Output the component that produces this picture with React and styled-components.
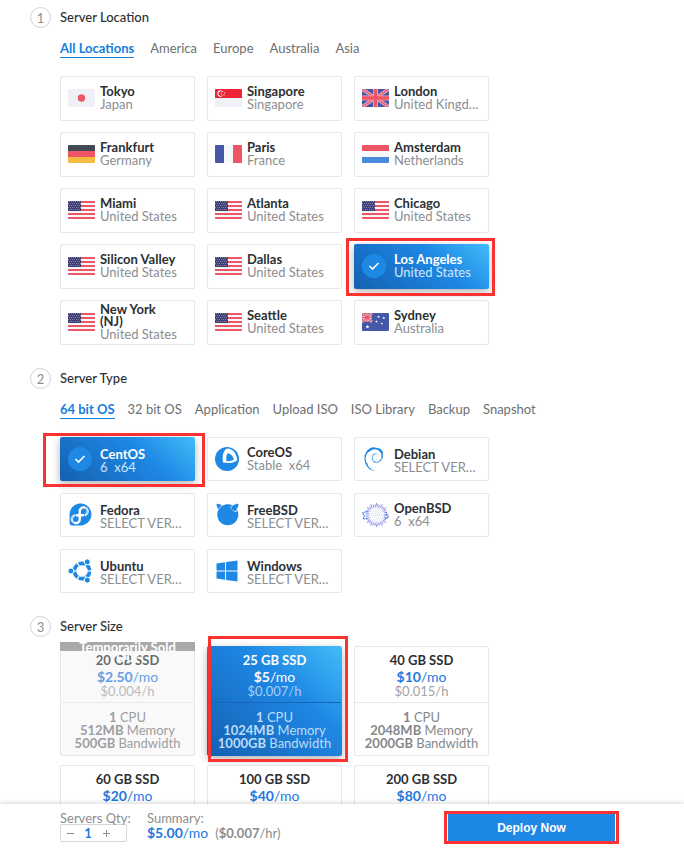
import React from "react";
import styled, { createGlobalStyle, css } from "styled-components";
import { FaFedora, FaFreebsd, FaWindows } from "react-icons/fa";
import { SiDebian } from "react-icons/si";

const GlobalStyle = createGlobalStyle`
  *, *::before, *::after { box-sizing: border-box; }
  body {
    margin: 0;
    background: #fff;
    color: #333;
    font-family: Lato, "Open Sans", sans-serif;
    font-size: 13px;
  }
  button, input { font: inherit; color: inherit; }
  h2, p { margin: 0; }
`;

const Page = styled.div`
  display: flex;
  flex-direction: column;
  height: 100vh;
`;

const Content = styled.main`
  flex: 1;
  min-height: 0;
  overflow-y: auto;
  scrollbar-width: none;
  padding: 7px 60px 20px 30px;
`;

const Section = styled.section`
  padding-left: 30px;
  margin-bottom: 23px;
`;

const SectionHead = styled.header`
  display: flex;
  align-items: flex-start;
  gap: 9px;
  margin: 0 0 ${(p) => p.$space || 0}px -30px;
`;

const StepNumber = styled.span`
  display: grid;
  place-items: center;
  width: 21px;
  height: 21px;
  border: 1px solid #ced4da;
  border-radius: 50%;
  color: #868e96;
  font-size: 13px;
`;

const SectionTitle = styled.h2`
  font-size: 13px;
  font-weight: 500;
  line-height: 20px;
  color: #2c3033;
`;

const TabList = styled.nav`
  display: flex;
  flex-wrap: wrap;
  gap: 0 ${(p) => p.$gap}px;
  margin: 12px 0 18px;
`;

const Tab = styled.button`
  padding: 0;
  border: 0;
  border-bottom: 1px solid ${(p) => (p.$active ? "#1480dc" : "transparent")};
  background: none;
  color: ${(p) => (p.$active ? "#1480dc" : "#6c6f73")};
  font-weight: ${(p) => (p.$active ? 700 : 400)};
  line-height: 17px;
  cursor: pointer;
`;

const CardGrid = styled.div`
  display: grid;
  grid-template-columns: repeat(3, minmax(0, 1fr));
  grid-auto-rows: minmax(${(p) => p.$row}px, auto);
  gap: ${(p) => p.$gap}px 12px;
  margin-right: 135px;

  @media (max-width: 600px) {
    margin-right: 0;
  }
`;

const selectedFill = css`
  border-color: transparent;
  background: linear-gradient(42deg, #1560b0 0%, #1e88e5 62%, #42bcf8 100%) border-box;
  box-shadow: 0 3px 8px rgba(0, 0, 0, 0.3);
  color: #fff;
`;

const Card = styled.button`
  position: relative;
  display: flex;
  align-items: center;
  gap: 5px;
  min-width: 0;
  padding: 0 7px;
  border: 1px solid #e4e7ea;
  border-radius: 2px;
  background: #fff;
  text-align: left;
  cursor: pointer;
  ${(p) => p.$selected && selectedFill}
`;

const IconSlot = styled.span`
  display: flex;
  flex: 0 0 27px;
  margin-bottom: 1px;
  color: #1e88e5;
`;

const CardText = styled.span`
  display: block;
  min-width: 0;
  padding-top: ${(p) => (p.$versioned ? 4 : 0)}px;
`;

const CardName = styled.span`
  display: block;
  max-width: 80px;
  color: ${(p) => (p.$selected ? "#fff" : "#2c3033")};
  font-weight: 700;
  line-height: 12px;
`;

const CardNote = styled.span`
  display: block;
  overflow: hidden;
  color: ${(p) => (p.$selected ? "#d0e6fa" : "#8b8e91")};
  line-height: 15px;
  white-space: pre;
  text-overflow: ellipsis;
`;

const CheckDisc = styled.span`
  display: grid;
  place-items: center;
  width: 24px;
  height: 24px;
  border-radius: 50%;
  background: #1e88e5;
`;

const Marker = styled.span`
  position: absolute;
  z-index: 2;
  inset: ${(p) => p.$inset};
  border: 3px solid #fa3232;
  pointer-events: none;
`;

const PlanCard = styled.button`
  position: relative;
  display: block;
  min-width: 0;
  padding: 0;
  border: 1px solid #e4e7ea;
  border-radius: 2px;
  background: ${(p) => (p.$soldOut ? "#f9f9f9" : "#fff")};
  color: #2c3033;
  text-align: center;
  cursor: pointer;
  ${(p) => p.$selected && selectedFill}
`;

const PlanTop = styled.span`
  display: block;
  padding: 5px 0;
  border-bottom: 1px solid ${(p) => (p.$selected ? "#1565b8" : "#e4e7ea")};
  opacity: ${(p) => (p.$soldOut ? 0.7 : 1)};
`;

const PlanName = styled.span`
  display: block;
  font-weight: 700;
  line-height: 16px;
`;

const PlanPrice = styled.span`
  display: block;
  color: ${(p) => (p.$selected ? "#fff" : "#1e78e0")};
  font-size: 14px;
  line-height: 17px;
`;

const PlanHourly = styled.span`
  display: block;
  color: ${(p) => (p.$selected ? "#a5cff5" : "#a0a2a4")};
  line-height: 12px;
`;

const PlanSpecs = styled.span`
  display: block;
  padding: 8px 0 5px;
  color: ${(p) => (p.$selected ? "#bcdcf8" : "#85888b")};
  line-height: 13px;
  opacity: ${(p) => (p.$soldOut ? 0.8 : 1)};
`;

const SpecLine = styled.span`
  display: block;
`;

const Ribbon = styled.span`
  position: absolute;
  z-index: 1;
  inset: -5px -1px auto;
  height: 9px;
  padding: 0 15px;
  background: #a9a9a9;
  color: #fff;
  font-weight: 700;
  line-height: 10px;
`;

const Footer = styled.footer`
  display: flex;
  align-items: flex-start;
  min-height: 46px;
  padding: 8px 68px 7px 60px;
  background: #fff;
  box-shadow: 0 -1px 5px rgba(0, 0, 0, 0.16);
  color: #8b8e91;
  white-space: nowrap;
  z-index: 3;
`;

const Quantity = styled.div`
  width: 67px;
`;

const FieldLabel = styled.label`
  display: block;
  line-height: 12px;
`;

const Stepper = styled.div`
  display: flex;
  height: 18px;
  border: 1px solid #d5d8db;
  border-radius: 2px;
`;

const StepButton = styled.button`
  display: grid;
  place-items: center;
  width: 18px;
  padding: 0;
  border: 0;
  background: none;
  color: #8b8e91;
  cursor: pointer;
`;

const QuantityInput = styled.input`
  width: 18px;
  padding: 0;
  border: 0;
  background: none;
  color: #1e78e0;
  font-weight: 700;
  text-align: center;
`;

const Summary = styled.div`
  margin-left: 20px;
`;

const SummaryLabel = styled.p`
  line-height: 12px;
`;

const SummaryValues = styled.p`
  line-height: 18px;
`;

const Total = styled.span`
  margin-right: 7px;
  color: #1e78e0;
  font-size: 14px;
`;

const DeployWrap = styled.div`
  position: relative;
  margin: 2px 0 0 auto;
  padding: 0 1px;
`;

const DeployButton = styled.button`
  display: block;
  width: 167px;
  height: 27px;
  padding: 0;
  border: 0;
  background: #1e88e5;
  color: #fff;
  font-family: "Liberation Sans", sans-serif;
  font-size: 12px;
  font-weight: 700;
  cursor: pointer;
`;

const FlagSvg = styled.svg`
  display: block;
  width: 27px;
  height: 18px;
  border-radius: 1px;
`;

const star = (cx, cy, r) =>
  Array.from({ length: 10 }, (_, i) => {
    const a = (Math.PI * i) / 5 - Math.PI / 2;
    const d = i % 2 ? r * 0.45 : r;
    return `${cx + d * Math.cos(a)},${cy + d * Math.sin(a)}`;
  }).join(" ");

const UnionJack = () => (
  <>
    <path fill="#4558a7" d="M0 0h27v18H0z" />
    <path stroke="#e8b0c5" strokeWidth="3.4" d="M0 0l27 18M27 0L0 18" />
    <path stroke="#ee5565" strokeWidth="1.4" d="M0 0l27 18M27 0L0 18" />
    <path stroke="#f3a5b0" strokeWidth="5" d="M13.5 0v18M0 9h27" />
    <path stroke="#ee5565" strokeWidth="3.4" d="M13.5 0v18M0 9h27" />
  </>
);

const flags = {
  jp: (
    <>
      <path fill="#f0f1f6" d="M0 0h27v18H0z" />
      <circle cx="13.5" cy="9" r="3.7" fill="#ee5565" />
    </>
  ),
  sg: (
    <>
      <path fill="#f0f1f6" d="M0 0h27v18H0z" />
      <path fill="#ee2436" d="M0 0h27v9H0z" />
      <path fill="none" stroke="#fff" strokeWidth="1.1" d="M6.5 1.8a2.9 2.9 0 1 0 0 5.6" />
      <g fill="#fff">
        <circle cx="7.6" cy="2.5" r=".6" />
        <circle cx="9.6" cy="3.8" r=".6" />
        <circle cx="6.4" cy="4" r=".6" />
        <circle cx="9" cy="6" r=".6" />
        <circle cx="7" cy="6" r=".6" />
      </g>
    </>
  ),
  gb: <UnionJack />,
  de: (
    <>
      <path fill="#434a54" d="M0 0h27v6H0z" />
      <path fill="#ee5565" d="M0 6h27v6H0z" />
      <path fill="#f6bb42" d="M0 12h27v6H0z" />
    </>
  ),
  fr: (
    <>
      <path fill="#f5f7fa" d="M0 0h27v18H0z" />
      <path fill="#4558a7" d="M0 0h9v18H0z" />
      <path fill="#ee5565" d="M18 0h9v18h-9z" />
    </>
  ),
  nl: (
    <>
      <path fill="#f5f7fa" d="M0 0h27v18H0z" />
      <path fill="#ee5565" d="M0 0h27v6H0z" />
      <path fill="#4a89dc" d="M0 12h27v6H0z" />
    </>
  ),
  us: (
    <>
      <path fill="#f5f7fa" d="M0 0h27v18H0z" />
      {[0, 4, 8, 12, 16].map((y) => (
        <path key={y} fill="#ee5565" d={`M0 ${y}h27v2H0z`} />
      ))}
      <path fill="#3f3f78" d="M0 0h13v10H0z" />
      {[1, 3, 5, 7, 9].map((y) => (
        <path
          key={y}
          stroke="#8382a8"
          strokeWidth="1"
          strokeDasharray="1 1"
          d={`M${y % 4 === 1 ? 1 : 0} ${y - 0.5}H13`}
        />
      ))}
    </>
  ),
  au: (
    <>
      <path fill="#4558a7" d="M0 0h27v18H0z" />
      <path stroke="#f3c5d0" strokeWidth="2.6" d="M0 0l10 9M10 0L0 9M5 0v9M0 4.5h10" />
      <path stroke="#ee5565" strokeWidth="1.2" d="M0 0l10 9M10 0L0 9M5 0v9M0 4.5h10" />
      <g fill="#fff">
        <polygon points={star(5.5, 13.8, 2)} />
        <polygon points={star(16.5, 3.8, 1.4)} />
        <polygon points={star(21.8, 5, 1.4)} />
        <polygon points={star(14.5, 8.6, 1.4)} />
        <polygon points={star(19.8, 10.5, 1.3)} />
      </g>
    </>
  ),
};

const Flag = ({ code }) => (
  <FlagSvg viewBox="0 0 27 18" aria-hidden="true">
    {flags[code]}
  </FlagSvg>
);

const CoreOsLogo = () => (
  <svg width="24" height="24" viewBox="0 0 24 24">
    <circle cx="12" cy="12" r="12" fill="#1e88e5" />
    <path fill="#fff" d="M12 1.6c5.500 0 9.800 4.700 10.200 11.600-3.200 2.800-8.600 3.500-14.200 2.400C7 9.500 8 4 12 1.600z" />
    <path fill="#1e88e5" d="M12.500 6.300c3.700.5 6 3.400 6.200 6.500-1.900 1.200-4.400 1.600-7.200 1.400-.5-3-.2-6.100 1-7.900z" />
  </svg>
);

const UbuntuLogo = () => (
  <svg width="24" height="24" viewBox="0 0 24 24" fill="none">
    <circle
      cx="14"
      cy="12"
      r="7.600"
      stroke="#1e88e5"
      strokeWidth="3.600"
      pathLength="360"
      strokeDasharray="50 10"
      strokeDashoffset="-5"
    />
    <g fill="#1e88e5" stroke="#fff" strokeWidth="1">
      <circle cx="2.900" cy="12" r="3" />
      <circle cx="19.300" cy="2.900" r="3" />
      <circle cx="19.300" cy="21.100" r="3" />
    </g>
  </svg>
);

const OpenBsdLogo = () => (
  <svg width="27" height="24" viewBox="0 0 27 24" fill="none" stroke="#7d86e4">
    <circle cx="14.500" cy="12" r="9.300" strokeWidth="3" strokeDasharray="1.200 .7" opacity=".75" />
    {[7, 5, 3, 1.200].map((r) => (
      <circle key={r} cx="14.500" cy="12" r={r} strokeWidth="1" strokeDasharray=".8 1.300" opacity=".5" />
    ))}
    <path stroke="#4f86e6" strokeWidth="1.200" strokeDasharray="1.600 .5" d="M5.500 8L.5 10l2 3-1.500 3 5-.500M24 9l2.500 5.500-3.500 1" />
    <path
      strokeWidth=".9"
      d="M14.500 2V0M9.500 3L8.600 1.200M19.500 3l.9-1.800M14.500 22v1.800M9.500 21l-.9 1.800M19.500 21l.9 1.800M6.500 5.500L5 4.200M22.500 5.500L24 4.200M6.500 18.500L5 19.800M22.500 18.500l1.500 1.300"
    />
  </svg>
);

const CheckIcon = () => (
  <svg width="12" height="10" viewBox="0 0 12 10" fill="none" aria-hidden="true">
    <path stroke="#fff" strokeWidth="1.600" d="M1.500 5l3 3 6-6" />
  </svg>
);

const osLogos = {
  coreos: <CoreOsLogo />,
  debian: <SiDebian size={24} />,
  fedora: <FaFedora size={25} />,
  freebsd: <FaFreebsd size={25} />,
  openbsd: <OpenBsdLogo />,
  ubuntu: <UbuntuLogo />,
  windows: <FaWindows size={24} />,
};

const locations = [
  ["Tokyo", "Japan", "jp"],
  ["Singapore", "Singapore", "sg"],
  ["London", "United Kingdom", "gb"],
  ["Frankfurt", "Germany", "de"],
  ["Paris", "France", "fr"],
  ["Amsterdam", "Netherlands", "nl"],
  ["Miami", "United States", "us"],
  ["Atlanta", "United States", "us"],
  ["Chicago", "United States", "us"],
  ["Silicon Valley", "United States", "us"],
  ["Dallas", "United States", "us"],
  ["Los Angeles", "United States", "us"],
  ["New York (NJ)", "United States", "us"],
  ["Seattle", "United States", "us"],
  ["Sydney", "Australia", "au"],
];

const systems = [
  { name: "CentOS", note: "6  x64", logo: "centos", versioned: true },
  { name: "CoreOS", note: "Stable  x64", logo: "coreos" },
  { name: "Debian", note: "SELECT VERSION", logo: "debian", versioned: true },
  { name: "Fedora", note: "SELECT VERSION", logo: "fedora", versioned: true },
  { name: "FreeBSD", note: "SELECT VERSION", logo: "freebsd", versioned: true },
  { name: "OpenBSD", note: "6  x64", logo: "openbsd" },
  { name: "Ubuntu", note: "SELECT VERSION", logo: "ubuntu", versioned: true },
  { name: "Windows", note: "SELECT VERSION", logo: "windows", versioned: true },
];

const plans = [
  { disk: "20 GB SSD", price: "$2.50", hourly: "$0.004/h", cpu: "1", memory: "512MB", bandwidth: "500GB", soldOut: true },
  { disk: "25 GB SSD", price: "$5", hourly: "$0.007/h", cpu: "1", memory: "1024MB", bandwidth: "1000GB" },
  { disk: "40 GB SSD", price: "$10", hourly: "$0.015/h", cpu: "1", memory: "2048MB", bandwidth: "2000GB" },
  { disk: "60 GB SSD", price: "$20", hourly: "$0.03/h", cpu: "2", memory: "4096MB", bandwidth: "3000GB" },
  { disk: "100 GB SSD", price: "$40", hourly: "$0.06/h", cpu: "4", memory: "8192MB", bandwidth: "4000GB" },
  { disk: "200 GB SSD", price: "$80", hourly: "$0.119/h", cpu: "6", memory: "16384MB", bandwidth: "5000GB" },
];

const Heading = ({ step, space, children }) => (
  <SectionHead $space={space}>
    <StepNumber>{step}</StepNumber>
    <SectionTitle>{children}</SectionTitle>
  </SectionHead>
);

const Tabs = ({ items, label, gap }) => (
  <TabList aria-label={label} $gap={gap}>
    {items.map((item, i) => (
      <Tab key={item} type="button" $active={i === 0}>
        {item}
      </Tab>
    ))}
  </TabList>
);

const OptionCard = ({ name, note, icon, versioned, selected, markerInset }) => (
  <Card type="button" $selected={selected} aria-pressed={selected}>
    <IconSlot>
      {selected ? (
        <CheckDisc>
          <CheckIcon />
        </CheckDisc>
      ) : (
        icon
      )}
    </IconSlot>
    <CardText $versioned={versioned}>
      <CardName $selected={selected}>{name}</CardName>
      <CardNote $selected={selected}>{note}</CardNote>
    </CardText>
    {selected && <Marker $inset={markerInset} />}
  </Card>
);

const Plan = ({ plan, selected }) => (
  <PlanCard type="button" $selected={selected} $soldOut={plan.soldOut} aria-pressed={selected}>
    {plan.soldOut && <Ribbon>Temporarily Sold Out</Ribbon>}
    <PlanTop $selected={selected} $soldOut={plan.soldOut}>
      <PlanName>{plan.disk}</PlanName>
      <PlanPrice $selected={selected}>
        <b>{plan.price}</b>/mo
      </PlanPrice>
      <PlanHourly $selected={selected}>{plan.hourly}</PlanHourly>
    </PlanTop>
    <PlanSpecs $selected={selected} $soldOut={plan.soldOut}>
      <SpecLine><b>{plan.cpu}</b> CPU</SpecLine>
      <SpecLine><b>{plan.memory}</b> Memory</SpecLine>
      <SpecLine><b>{plan.bandwidth}</b> Bandwidth</SpecLine>
    </PlanSpecs>
    {selected && <Marker $inset="-11px -7px -7px 0" />}
  </PlanCard>
);

export default function App() {
  return (
    <Page>
      <GlobalStyle />
      <Content>
        <Section>
          <Heading step={1}>Server Location</Heading>
          <Tabs gap={16} label="Regions" items={["All Locations", "America", "Europe", "Australia", "Asia"]} />
          <CardGrid $row={45} $gap={11}>
            {locations.map(([name, country, code]) => (
              <OptionCard
                key={name}
                name={name}
                note={country}
                icon={<Flag code={code} />}
                selected={name === "Los Angeles"}
                markerInset="-7px -7px -8px -9px"
              />
            ))}
          </CardGrid>
        </Section>
        <Section>
          <Heading step={2}>Server Type</Heading>
          <Tabs
            gap={13}
            label="Image types"
            items={["64 bit OS", "32 bit OS", "Application", "Upload ISO", "ISO Library", "Backup", "Snapshot"]}
          />
          <CardGrid $row={44} $gap={12}>
            {systems.map(({ name, note, logo, versioned }) => (
              <OptionCard
                key={name}
                name={name}
                note={note}
                versioned={versioned}
                icon={osLogos[logo]}
                selected={name === "CentOS"}
                markerInset="-5px -11px -7px -18px"
              />
            ))}
          </CardGrid>
        </Section>
        <Section>
          <Heading step={3} space={9}>Server Size</Heading>
          <CardGrid $row={110} $gap={9}>
            {plans.map((plan) => (
              <Plan key={plan.disk} plan={plan} selected={plan.disk === "25 GB SSD"} />
            ))}
          </CardGrid>
        </Section>
      </Content>
      <Footer>
        <Quantity>
          <FieldLabel htmlFor="quantity">Servers Qty:</FieldLabel>
          <Stepper>
            <StepButton type="button" aria-label="Decrease">
              <svg width="9" height="9" viewBox="0 0 9 9"><path stroke="#8b8e91" d="M1 4.500h7" /></svg>
            </StepButton>
            <QuantityInput id="quantity" type="text" defaultValue="1" />
            <StepButton type="button" aria-label="Increase">
              <svg width="9" height="9" viewBox="0 0 9 9"><path stroke="#8b8e91" d="M1 4.500h7M4.500 1v7" /></svg>
            </StepButton>
          </Stepper>
        </Quantity>
        <Summary>
          <SummaryLabel>Summary:</SummaryLabel>
          <SummaryValues>
            <Total><b>$5.00</b>/mo</Total>
            <span>(<b>$0.007</b>/hr)</span>
          </SummaryValues>
        </Summary>
        <DeployWrap>
          <DeployButton type="button">Deploy Now</DeployButton>
          <Marker $inset="-3px" />
        </DeployWrap>
      </Footer>
    </Page>
  );
}
